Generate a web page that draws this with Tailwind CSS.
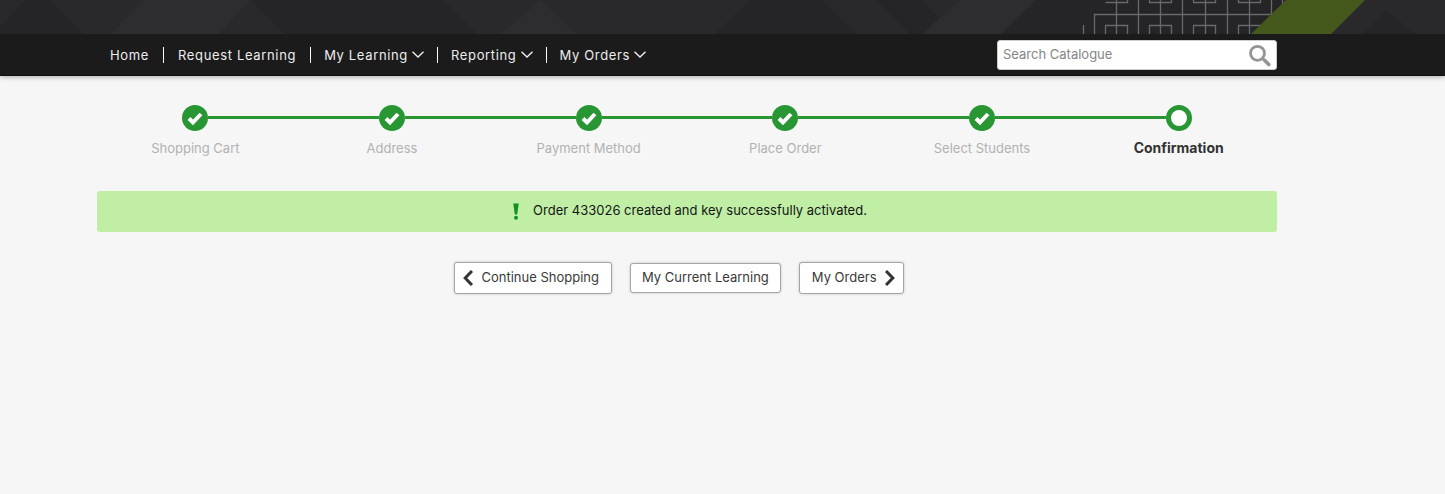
<!DOCTYPE html>
<html lang="en">
<head>
<meta charset="utf-8">
<meta name="viewport" content="width=device-width, initial-scale=1">
<title>Order confirmation</title>
<script src="https://cdn.jsdelivr.net/npm/@tailwindcss/browser@4"></script>
</head>
<body class="min-h-screen bg-[#f6f6f6] font-['Inter',sans-serif] text-[13px] text-[#3a3a3a]">
<header class="shadow-[0_1px_5px_rgba(0,0,0,0.3)]">
  <svg class="block h-[34px] w-full bg-[#252527]" viewBox="0 0 1445 34" preserveAspectRatio="xMidYMid slice" aria-hidden="true">
    <g fill="#29292b">
      <path d="M0 0H25L0 27Z"/>
      <path d="M50 0H143L111 34H83Z"/>
      <path d="M250 0L285 34H219Z"/>
      <path d="M443 0H750L715 34H477Z"/>
      <path d="M822 0H876L910 34H857Z"/>
      <path d="M922 0H960L939 19Z"/>
      <path d="M1360 0H1445V34H1330Z"/>
    </g>
    <g fill="#2d2d2f">
      <path d="M143 0H250L219 34H111Z"/>
      <path d="M541 0L577 34H500Z"/>
      <path d="M960 0H1036L1001 34H922Z"/>
    </g>
    <path d="M1386 11L1416 34H1362Z" fill="#252527"/>
    <g fill="none" stroke="#69696b" stroke-width="1.300">
      <path d="M1083.500 25V34M1094.500 34V14.500H1271.500V0M1116.500 0V34M1138.500 14V34M1138.500 0V14M1160.500 0V34M1182.500 0V34M1205.500 0V34M1227.500 0V34M1249.500 0V34M1282.500 0V4"/>
      <path d="M1105.500 2.500H1127.500V0M1149.500 0V2.500H1171.500V0M1193.500 0V2.500H1215.500V0M1238.500 0V2.500H1260.500V0"/>
      <path d="M1105.500 34V25.500H1127.500V34M1149.500 34V25.500H1171.500V34M1193.500 34V25.500H1215.500V34M1238.500 34V25.500H1260.500"/>
    </g>
    <path d="M1286 0H1365L1331 34H1251Z" fill="#45591d"/>
  </svg>
  <div class="flex h-[42px] items-center justify-between border-b border-[#120e12] bg-[#1b1b1b] pr-[168px] pl-[97px]">
    <nav aria-label="Main">
      <ul class="flex items-center divide-x divide-white tracking-wider text-[#ededed]">
        <li class="pr-[14px] pl-[13px]"><a href="#" class="block leading-4">Home</a></li>
        <li class="px-[14px]"><a href="#" class="block leading-4">Request Learning</a></li>
        <li class="px-[13px]"><a href="#" class="flex items-center gap-1 leading-4">My Learning<svg class="h-[7px] w-3" viewBox="0 0 12 7" fill="none" stroke="currentColor" stroke-width="1.400" aria-hidden="true"><path d="M.5 .7L6 6L11.500 .7"/></svg></a></li>
        <li class="px-[13px]"><a href="#" class="flex items-center gap-1 leading-4">Reporting<svg class="h-[7px] w-3" viewBox="0 0 12 7" fill="none" stroke="currentColor" stroke-width="1.400" aria-hidden="true"><path d="M.5 .7L6 6L11.500 .7"/></svg></a></li>
        <li class="px-[13px]"><a href="#" class="flex items-center gap-1 leading-4">My Orders<svg class="h-[7px] w-3" viewBox="0 0 12 7" fill="none" stroke="currentColor" stroke-width="1.400" aria-hidden="true"><path d="M.5 .7L6 6L11.500 .7"/></svg></a></li>
      </ul>
    </nav>
    <form class="flex h-[30px] w-[280px] items-center rounded-[3px] border border-[#cccccc] bg-white pr-1 pl-[5px]" role="search">
      <input type="search" aria-label="Search Catalogue" placeholder="Search Catalogue" class="min-w-0 flex-1 bg-transparent outline-none placeholder:text-[#858585]">
      <button type="submit" aria-label="Search"><svg class="block size-6" viewBox="0 0 24 24" fill="none" stroke="#959595" aria-hidden="true"><circle cx="9.500" cy="10.300" r="7" stroke-width="2.800"/><path d="M14.500 15.300L16.500 17.300" stroke-width="2.500"/><path d="M16.300 17.100L20.800 21.600" stroke-width="3.600" stroke-linecap="round"/></svg></button>
    </form>
  </div>
</header>
<main class="pt-[29px] pr-[168px] pb-8 pl-[97px]">
  <ol class="grid grid-cols-6 text-center leading-5 text-[#b2b2b2]">
    <li>
      <div class="flex items-center"><span class="flex-1"></span><svg class="size-[26px]" viewBox="0 0 26 26" aria-hidden="true"><circle cx="13" cy="13" r="13" fill="#279633"/><path d="M7 13.500L11 17.500L19 9" fill="none" stroke="#fff" stroke-width="4"/></svg><span class="mb-0.5 h-[3px] flex-1 bg-[#279633]"></span></div>
      <div class="mt-[7px]">Shopping Cart</div>
    </li>
    <li>
      <div class="flex items-center"><span class="mb-0.5 h-[3px] flex-1 bg-[#279633]"></span><svg class="size-[26px]" viewBox="0 0 26 26" aria-hidden="true"><circle cx="13" cy="13" r="13" fill="#279633"/><path d="M7 13.500L11 17.500L19 9" fill="none" stroke="#fff" stroke-width="4"/></svg><span class="mb-0.5 h-[3px] flex-1 bg-[#279633]"></span></div>
      <div class="mt-[7px]">Address</div>
    </li>
    <li>
      <div class="flex items-center"><span class="mb-0.5 h-[3px] flex-1 bg-[#279633]"></span><svg class="size-[26px]" viewBox="0 0 26 26" aria-hidden="true"><circle cx="13" cy="13" r="13" fill="#279633"/><path d="M7 13.500L11 17.500L19 9" fill="none" stroke="#fff" stroke-width="4"/></svg><span class="mb-0.5 h-[3px] flex-1 bg-[#279633]"></span></div>
      <div class="mt-[7px]">Payment Method</div>
    </li>
    <li>
      <div class="flex items-center"><span class="mb-0.5 h-[3px] flex-1 bg-[#279633]"></span><svg class="size-[26px]" viewBox="0 0 26 26" aria-hidden="true"><circle cx="13" cy="13" r="13" fill="#279633"/><path d="M7 13.500L11 17.500L19 9" fill="none" stroke="#fff" stroke-width="4"/></svg><span class="mb-0.5 h-[3px] flex-1 bg-[#279633]"></span></div>
      <div class="mt-[7px]">Place Order</div>
    </li>
    <li>
      <div class="flex items-center"><span class="mb-0.5 h-[3px] flex-1 bg-[#279633]"></span><svg class="size-[26px]" viewBox="0 0 26 26" aria-hidden="true"><circle cx="13" cy="13" r="13" fill="#279633"/><path d="M7 13.500L11 17.500L19 9" fill="none" stroke="#fff" stroke-width="4"/></svg><span class="mb-0.5 h-[3px] flex-1 bg-[#279633]"></span></div>
      <div class="mt-[7px]">Select Students</div>
    </li>
    <li aria-current="step">
      <div class="flex items-center"><span class="mb-0.5 h-[3px] flex-1 bg-[#279633]"></span><span class="size-[26px] rounded-full border-5 border-[#279633] bg-white"></span><span class="flex-1"></span></div>
      <div class="mt-[7px] text-sm leading-5 font-bold text-[#333333]">Confirmation</div>
    </li>
  </ol>
  <div role="status" class="mt-[33px] flex h-[41px] items-center justify-center gap-[14px] rounded-[3px] bg-[#c0eea5] pl-[6px] text-[#151515]">
    <svg class="h-[17px] w-[6px]" viewBox="0 0 6 17" fill="#149022" aria-hidden="true"><path d="M.3 .5H5.700L4.200 11.500H1.800Z"/><circle cx="3" cy="14.800" r="2"/></svg>
    <p class="pb-0.5">Order 433026 created and key successfully activated.</p>
  </div>
  <div class="mt-[30px] flex items-center justify-center gap-[18px] pr-4">
    <button type="button" class="flex h-8 items-center gap-2 rounded-[3px] border border-[#a5a5a5] bg-white pr-[12px] pl-[8px] shadow-[0_0_3px_rgba(0,0,0,0.2)]"><svg class="h-4 w-[10px]" viewBox="0 0 10 16" fill="none" stroke="#333" stroke-width="3" aria-hidden="true"><path d="M9 1L2.200 8L9 15"/></svg>Continue Shopping</button>
    <button type="button" class="h-[30px] rounded-[3px] border border-[#a5a5a5] bg-white px-[11px] shadow-[0_0_3px_rgba(0,0,0,0.2)]">My Current Learning</button>
    <button type="button" class="flex h-8 items-center gap-2 rounded-[3px] border border-[#a5a5a5] bg-white pr-[8px] pl-[12px] shadow-[0_0_3px_rgba(0,0,0,0.2)]">My Orders<svg class="h-4 w-[10px]" viewBox="0 0 10 16" fill="none" stroke="#333" stroke-width="3" aria-hidden="true"><path d="M1 1L7.800 8L1 15"/></svg></button>
  </div>
</main>
</body>
</html>
